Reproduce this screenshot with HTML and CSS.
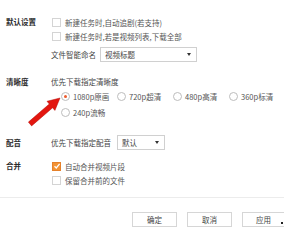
FILE: index.html
```html
<!DOCTYPE html>
<html>
<head>
<meta charset="utf-8">
<link rel="stylesheet" href="styles.css">
</head>
<body>
<div class="dialog">
  <div class="section s1">
    <div class="label">默认设置</div>
    <div class="content">
      <div class="row"><span class="cb"></span><span class="opt">新建任务时,自动追剧(若支持)</span></div>
      <div class="row"><span class="cb"></span><span class="opt">新建任务时,若是视频列表,下载全部</span></div>
      <div class="row selrow"><span class="txt">文件智能命名</span><span class="select w1"><span>视频标题</span><i class="caret"></i></span></div>
    </div>
  </div>
  <div class="section s2">
    <div class="label">清晰度</div>
    <div class="content">
      <div class="row r13"><span class="txt">优先下载指定清晰度</span></div>
      <div class="radios">
        <div class="ritem"><span class="radio on"></span><span class="opt">1080p原画</span></div>
        <div class="ritem"><span class="radio"></span><span class="opt">720p超清</span></div>
        <div class="ritem"><span class="radio"></span><span class="opt">480p高清</span></div>
        <div class="ritem"><span class="radio"></span><span class="opt">360p标清</span></div>
        <div class="ritem"><span class="radio"></span><span class="opt">240p流畅</span></div>
      </div>
    </div>
  </div>
  <div class="section s3">
    <div class="label">配音</div>
    <div class="content">
      <div class="row selrow2"><span class="txt">优先下载指定配音</span><span class="select w2"><span>默认</span><i class="caret"></i></span></div>
    </div>
  </div>
  <div class="section s4">
    <div class="label">合并</div>
    <div class="content">
      <div class="row"><span class="cb on"><svg viewBox="0 0 8 8" width="8" height="8"><path d="M1.5 4.2 L3.3 6 L6.6 1.8" fill="none" stroke="#fff" stroke-width="1.3"/></svg></span><span class="opt">自动合并视频片段</span></div>
      <div class="row"><span class="cb"></span><span class="opt">保留合并前的文件</span></div>
    </div>
  </div>
  <div class="sep"></div>
  <div class="buttons">
    <span class="btn">确定</span>
    <span class="btn">取消</span>
    <span class="btn last">应用</span>
  </div>
  <span class="grip"></span>
  <svg class="arrow" width="284" height="229" viewBox="0 0 284 229">
    <polygon points="60,98 54.9,110.4 52.6,107.8 31.6,125.9 28.4,122.1 49.3,104 47,101.3" fill="#e3160f" stroke="#b40d08" stroke-width="0.5"/>
  </svg>
</div>
</body>
</html>
```
FILE: styles.css
```css
html, body {
  margin: 0;
  padding: 0;
  background: #fff;
  width: 284px;
  height: 229px;
  overflow: hidden;
}
.dialog {
  position: relative;
  width: 284px;
  height: 229px;
  font-family: "Noto Sans CJK SC", "Noto Sans", sans-serif;
  font-size: 7.5px;
  color: #555;
  padding-top: 15px;
  box-sizing: border-box;
  overflow: hidden;
}
.section {
  display: flex;
}
.label {
  width: 45px;
  padding-left: 6px;
  font-weight: bold;
  color: #2a2a2a;
  line-height: 14px;
  flex: none;
}
.content {
  flex: 1;
  min-width: 0;
}
.row {
  display: flex;
  align-items: center;
  height: 14px;
}
.cb {
  width: 7px;
  height: 7px;
  border: 1px solid #d4d4d4;
  background: #fff;
  margin-left: 1px;
  margin-right: 4px;
  flex: none;
  display: flex;
}
.cb.on {
  background: #f29334;
  border-color: #e5812a;
}
.cb svg {
  margin: -0.5px;
}
.opt {
  color: #555;
  white-space: nowrap;
}
.txt {
  color: #444;
  white-space: nowrap;
}
.selrow {
  margin-top: 4px;
  height: 15px;
}
.select {
  height: 13px;
  border: 1px solid #d0d0d0;
  display: flex;
  align-items: center;
  justify-content: space-between;
  padding: 0 5px 0 4px;
  box-sizing: content-box;
  color: #444;
}
.w1 {
  margin-left: 4px;
  width: 86px;
}
.w2 {
  margin-left: 6px;
  width: 37px;
}
.caret {
  width: 0;
  height: 0;
  border-left: 2.5px solid transparent;
  border-right: 2.5px solid transparent;
  border-top: 3px solid #333;
}
.s2 {
  margin-top: 13px;
}
.s2 .label {
  line-height: 13px;
}
.r13 {
  height: 13px;
}
.radios {
  display: grid;
  grid-template-columns: repeat(4, 56px);
  grid-auto-rows: 16px;
  margin-left: 10px;
}
.ritem {
  display: flex;
  align-items: center;
}
.radio {
  width: 7px;
  height: 7px;
  border: 1px solid #bdbdbd;
  border-radius: 50%;
  margin-right: 3px;
  flex: none;
  display: flex;
  align-items: center;
  justify-content: center;
  background: #fff;
}
.radio.on::after {
  content: "";
  width: 3px;
  height: 3px;
  border-radius: 50%;
  background: #ec5a2c;
}
.s3 {
  margin-top: 15px;
}
.s3 .label {
  line-height: 15px;
}
.selrow2 {
  height: 15px;
}
.s4 {
  margin-top: 9px;
}
.sep {
  margin-top: 10px;
  height: 1px;
  background: #ececec;
}
.buttons {
  display: flex;
  gap: 10px;
  margin-top: 14px;
  margin-left: 132px;
}
.btn {
  width: 43px;
  height: 13px;
  border: 1px solid #d6d6d6;
  display: flex;
  align-items: center;
  justify-content: center;
  color: #444;
  flex: none;
}
.btn.last {
  width: 41px;
  border-right: none;
  padding-right: 3px;
  box-sizing: content-box;
}
.grip {
  position: absolute;
  left: 281px;
  top: 222px;
  width: 2px;
  height: 2px;
  background: #222;
}
.arrow {
  position: absolute;
  left: 0;
  top: 0;
  pointer-events: none;
}
```
